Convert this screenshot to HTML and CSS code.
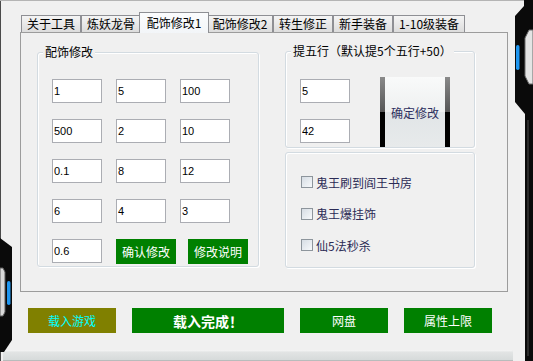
FILE: index.html
```html
<!DOCTYPE html>
<html lang="zh-CN">
<head>
    <meta charset="UTF-8">
    <meta name="viewport" content="width=device-width, initial-scale=1.0">
    <title>配饰修改</title>
    <link rel="stylesheet" href="styles.css">
</head>
<body>
    <div class="app">
        <div class="window">
            <div class="tabs">
                <div class="tab">关于工具</div>
                <div class="tab">炼妖龙骨</div>
                <div class="tab active">配饰修改1</div>
                <div class="tab wide">配饰修改2</div>
                <div class="tab">转生修正</div>
                <div class="tab">新手装备</div>
                <div class="tab wider">1-10级装备</div>
            </div>

            <div class="panel">
                <div class="group group-main">
                    <div class="group-title">配饰修改</div>
                    <div class="field-grid">
                        <input class="field" value="1" readonly>
                        <input class="field" value="5" readonly>
                        <input class="field" value="100" readonly>
                        <input class="field" value="500" readonly>
                        <input class="field" value="2" readonly>
                        <input class="field" value="10" readonly>
                        <input class="field" value="0.1" readonly>
                        <input class="field" value="8" readonly>
                        <input class="field" value="12" readonly>
                        <input class="field" value="6" readonly>
                        <input class="field" value="4" readonly>
                        <input class="field" value="3" readonly>
                    </div>
                    <div class="field-row">
                        <input class="field" value="0.6" readonly>
                        <button class="btn-green small confirm">确认修改</button>
                        <button class="btn-green small">修改说明</button>
                    </div>
                </div>

                <div class="side">
                    <div class="group group-wuxing">
                        <div class="group-title">提五行（默认提5个五行+50）</div>
                        <div class="wuxing-body">
                            <div class="wuxing-inputs">
                                <input class="field" value="5" readonly>
                                <input class="field" value="42" readonly>
                            </div>
                            <button class="btn-chrome">确定修改</button>
                        </div>
                    </div>

                    <div class="group group-options">
                        <label class="check"><span class="box"></span>鬼王刷到阎王书房</label>
                        <label class="check"><span class="box"></span>鬼王爆挂饰</label>
                        <label class="check"><span class="box"></span>仙5法秒杀</label>
                    </div>
                </div>
            </div>

            <div class="actions">
                <button class="btn-load">载入游戏</button>
                <button class="btn-green done">载入完成！</button>
                <button class="btn-green">网盘</button>
                <button class="btn-green">属性上限</button>
            </div>
        </div>

        <div class="bottom-bar"></div>

        <!-- window frame decorations -->
        <svg class="deco-left" width="14" height="116" viewBox="0 0 14 116">
            <polygon points="0,0 12,9 12,102 4,114 0,114" fill="#0a0a0a"/>
            <polygon points="0,30 3,30 5,34 5,74 3,78 0,78" fill="#d8d8d8" stroke="#5a5a5a" stroke-width="1"/>
            <rect x="7" y="43" width="3.5" height="24" rx="1.7" fill="#1e96f0"/>
        </svg>
        <svg class="deco-right" width="20" height="361" viewBox="0 0 20 361">
            <polygon points="11,0 20,0 20,361 12,361 12,114 2,102 2,16 11,6" fill="#0a0a0a"/>
            <polygon points="12,38 16,30 20,30 20,84 16,84 12,76" fill="#e4e4e4" stroke="#6a6a6a" stroke-width="1"/>
            <rect x="14" y="120" width="2" height="236" fill="#2a2a2a"/>
            <rect x="3" y="45" width="3.5" height="25" rx="1.7" fill="#1e96f0"/>
        </svg>
    </div>
</body>
</html>
```

FILE: styles.css
```css
* {
    box-sizing: border-box;
}

body {
    margin: 0;
    width: 533px;
    height: 361px;
    overflow: hidden;
    background: #f0f0f0;
    font-family: "Noto Sans CJK SC", sans-serif;
    font-size: 12px;
    color: #000;
}

.app {
    position: relative;
    width: 533px;
    height: 361px;
    box-shadow: inset 0 1px 0 #b4b4b4, inset 1px 0 0 #4a4a4a;
}

.window {
    padding: 12px 0 0 20px;
}

/* tabs */
.tabs {
    display: flex;
    align-items: flex-end;
    height: 20px;
    padding-left: 1px;
}

.tab {
    width: 60px;
    height: 17px;
    line-height: 16px;
    text-align: center;
    border: 1px solid #8e8f94;
    border-bottom: none;
    background: linear-gradient(#f4f4f4, #dcdcdc);
    white-space: nowrap;
}

.tab.wide {
    width: 66px;
}

.tab.wider {
    width: 72px;
}

.tab.active {
    position: relative;
    z-index: 1;
    width: 70px;
    height: 21px;
    margin: 0 -2px -1px;
    line-height: 20px;
    background: linear-gradient(#fbfcfd, #f2f5f8);
}

.panel {
    display: flex;
    align-items: flex-start;
    width: 488px;
    height: 260px;
    border: 1px solid #9c9c9c;
    padding: 19px 0 0 16px;
}

/* group boxes */
.group {
    border: 1px solid #d3dbe1;
    border-radius: 3px;
    box-shadow: inset 1px 1px 0 #fff, 1px 1px 0 #fff;
}

.group-title {
    display: inline-block;
    height: 14px;
    line-height: 14px;
    margin: -8px 0 0 -9px;
    padding: 0 2px;
    background: #f0f0f0;
    vertical-align: top;
    white-space: nowrap;
}

.group-main {
    width: 222px;
    height: 215px;
    padding-left: 14px;
}

.field-grid {
    display: grid;
    grid-template-columns: repeat(3, 50px);
    grid-auto-rows: 24px;
    column-gap: 14px;
    row-gap: 16px;
    margin-top: 9px;
}

.field {
    width: 50px;
    height: 24px;
    margin: 0;
    padding: 0 1px;
    border: 1px solid #abadb3;
    background: #fff;
    font-family: "Liberation Sans", sans-serif;
    font-size: 11px;
    color: #000;
    outline: none;
}

.field-row {
    display: flex;
    align-items: flex-start;
    margin-top: 16px;
}

.btn-green,
.btn-load,
.btn-chrome {
    border: none;
    padding: 0;
    margin: 0;
    font-family: "Noto Sans CJK SC", sans-serif;
    font-size: 12px;
    cursor: pointer;
}

.btn-green {
    background: #008000;
    color: #fff;
    width: 88px;
    height: 25px;
}

.btn-green.small {
    width: 60px;
    margin-left: 12px;
}

.btn-green.small.confirm {
    margin-left: 14px;
}

.btn-green.done {
    width: 152px;
    font-size: 14px;
    font-weight: bold;
}

.btn-load {
    background: #808000;
    color: #00ffff;
    width: 88px;
    height: 25px;
}

/* right column */
.side {
    width: 190px;
    margin: -1px 0 0 26px;
}

.group-wuxing {
    height: 97px;
    padding-left: 14px;
}

.wuxing-body {
    display: flex;
    align-items: flex-start;
    margin-top: 10px;
}

.wuxing-inputs {
    display: flex;
    flex-direction: column;
    gap: 16px;
}

.btn-chrome {
    width: 70px;
    height: 70px;
    margin: -2px 0 0 30px;
    color: #2e3060;
    background:
        linear-gradient(#8a8a8a, #555 50%, #000 50%) left / 5px 100% no-repeat,
        linear-gradient(#8a8a8a, #555 50%, #000 50%) right / 5px 100% no-repeat,
        linear-gradient(#f9fafa, #eef0f0 50%, #e1e5e7 50%, #e7eaeb);
}

.group-options {
    height: 116px;
    margin-top: 4px;
    padding: 21px 0 0 15px;
    display: flex;
    flex-direction: column;
    gap: 15.5px;
}

.check {
    display: flex;
    align-items: center;
    height: 16px;
    color: #2b2b55;
}

.box {
    width: 12px;
    height: 12px;
    margin-right: 3px;
    border: 1px solid #8d959c;
    background: linear-gradient(135deg, #d6dde4, #f7f9fb);
}

/* bottom buttons */
.actions {
    display: flex;
    gap: 16px;
    margin: 16px 0 0 8px;
}

.bottom-bar {
    width: 510px;
    height: 11px;
    margin: 17px 0 0 3px;
    border-radius: 3px 3px 0 0;
    background: linear-gradient(#f6f6f6, #e2e4e4 20%, #d5d9d9);
    box-shadow: inset 0 -1px 0 #b8bcbc;
}

.deco-left {
    position: absolute;
    left: 0;
    top: 238px;
}

.deco-right {
    position: absolute;
    left: 513px;
    top: 0;
}
```
